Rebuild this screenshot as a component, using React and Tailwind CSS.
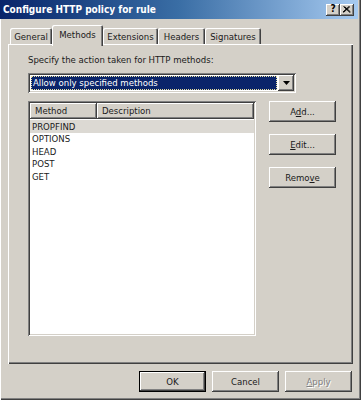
import React from "react";

const raised =
  "shadow-[inset_-1px_-1px_0_#404040,inset_1px_1px_0_#ffffff,inset_-2px_-2px_0_#808080]";
const sunken =
  "shadow-[inset_1px_1px_0_#808080,inset_-1px_-1px_0_#ffffff,inset_2px_2px_0_#404040,inset_-2px_-2px_0_#d4d0c8]";

function Btn({ children, className = "" }) {
  return (
    <div
      className={`flex items-center justify-center w-[67px] h-[21px] bg-[#d4d0c8] ${raised} ${className}`}
    >
      {children}
    </div>
  );
}

function Tab({ label, w, selected }) {
  if (selected) {
    return (
      <div
        className={`relative z-10 -mb-[2px] h-[21px] flex items-start justify-center pt-[5px] bg-[#d4d0c8] rounded-t-[2px] shadow-[inset_1px_1px_0_#ffffff,inset_-1px_0_0_#404040,inset_-2px_0_0_#808080]`}
        style={{ width: w }}
      >
        {label}
      </div>
    );
  }
  return (
    <div
      className={`h-[16px] flex items-center justify-center bg-[#d4d0c8] rounded-t-[2px] shadow-[inset_1px_1px_0_#ffffff,inset_-1px_0_0_#404040,inset_-2px_0_0_#808080] pt-[2px]`}
      style={{ width: w }}
    >
      {label}
    </div>
  );
}

export default function App() {
  const rows = ["PROPFIND", "OPTIONS", "HEAD", "POST", "GET"];
  return (
    <div className="w-[361px] h-[400px] overflow-hidden bg-[#d4d0c8] text-[9.5px] leading-none text-[#1a1a1a] font-['DejaVu_Sans_Condensed','Liberation_Sans',Arial,sans-serif] flex flex-col shadow-[inset_1px_0_0_#ffffff,inset_-1px_-1px_0_#404040,inset_-2px_-2px_0_#808080]">
      {/* Title bar */}
      <div className="h-[19px] mr-[3px] flex items-center justify-between pl-[3px] pr-[4px] bg-gradient-to-r from-[#0a246a] via-[#3a6ea5] to-[#a6caf0] text-white font-bold text-[10px]">
        <span>Configure HTTP policy for rule</span>
        <div className="flex">
          <div className={`w-[14px] h-[12px] bg-[#d4d0c8] ${raised} flex items-center justify-center text-black font-bold text-[10px] pb-[1px]`}>
            ?
          </div>
          <div className={`w-[14px] h-[12px] bg-[#d4d0c8] ${raised} flex items-center justify-center`}>
            <svg width="8" height="7" viewBox="0 0 8 7">
              <path d="M0.5 0.5 L7 6.5 M1.5 0.5 L7.5 6 M7 0.5 L0.5 6.5 M6 0.5 L0 6" stroke="#000" strokeWidth="1" fill="none" />
            </svg>
          </div>
        </div>
      </div>

      {/* Tabs */}
      <div className="mt-[6px] h-[19px] flex items-end pl-[10px]">
        <Tab label="General" w={42} />
        <Tab label="Methods" w={51} selected />
        <Tab label="Extensions" w={55} />
        <Tab label="Headers" w={47} />
        <Tab label="Signatures" w={56} />
      </div>

      {/* Panel */}
      <div className="ml-[8px] mr-[8px] h-[320px] bg-[#d4d0c8] shadow-[inset_1px_1px_0_#ffffff,inset_-1px_-1px_0_#404040,inset_-2px_-2px_0_#808080] pl-[20px] pt-[10px] flex flex-col">
        <div className="h-[11px] flex items-center">Specify the action taken for HTTP methods:</div>

        {/* Combo */}
        <div className={`mt-[8px] w-[268px] h-[20px] bg-white ${sunken} p-[2px] flex`}>
          <div className="flex-1 p-[1px] bg-white">
            <div className="h-full bg-[#0a246a] text-white border border-dotted border-[#e8e0a0] flex items-center pl-[1px]">
              Allow only specified methods
            </div>
          </div>
          <div className={`w-[16px] h-[16px] bg-[#d4d0c8] ${raised} flex items-center justify-center`}>
            <svg width="7" height="4" viewBox="0 0 7 4">
              <path d="M0 0 H7 L3.5 4 Z" fill="#000" />
            </svg>
          </div>
        </div>

        {/* List + buttons */}
        <div className="mt-[8px] flex">
          <div className={`w-[228px] h-[235px] bg-white ${sunken} p-[2px] flex flex-col`}>
            <div className="h-[16px] flex bg-[#d4d0c8]">
              <div className={`w-[67px] h-full flex items-center pl-[5px] ${raised}`}>Method</div>
              <div className={`flex-1 h-full flex items-center pl-[5px] ${raised}`}>Description</div>
            </div>
            <div className="pt-[1px] flex flex-col">
              {rows.map((r, i) => (
                <div
                  key={r}
                  className={`h-[12.5px] flex items-center pl-[2px] ${i === 0 ? "bg-[#dcd9d3]" : ""}`}
                >
                  {r}
                </div>
              ))}
            </div>
          </div>
          <div className="ml-[13px] flex flex-col gap-[12px]">
            <Btn>
              <span>
                A<span className="underline">d</span>d...
              </span>
            </Btn>
            <Btn>
              <span>
                <span className="underline">E</span>dit...
              </span>
            </Btn>
            <Btn>
              <span>
                Remo<span className="underline">v</span>e
              </span>
            </Btn>
          </div>
        </div>
      </div>

      {/* Bottom buttons */}
      <div className="mt-[7px] flex justify-end gap-[6px] pr-[9px]">
        <Btn className="w-[66px] shadow-[inset_0_0_0_1px_#000000,inset_-2px_-2px_0_#404040,inset_2px_2px_0_#ffffff,inset_-3px_-3px_0_#808080]">
          OK
        </Btn>
        <Btn className="w-[66px]">Cancel</Btn>
        <Btn className="w-[66px]">
          <span className="text-[#808080] [text-shadow:1px_1px_0_#ffffff]">
            <span className="underline">A</span>pply
          </span>
        </Btn>
      </div>
    </div>
  );
}
